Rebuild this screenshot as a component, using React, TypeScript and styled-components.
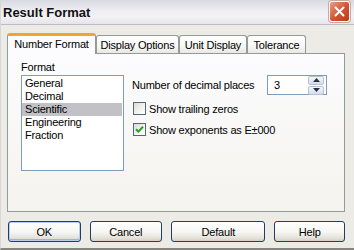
import React from 'react';
import styled, { createGlobalStyle } from 'styled-components';

const GlobalStyle = createGlobalStyle`
  html, body {
    margin: 0;
    padding: 0;
  }
  body {
    width: 354px;
    height: 250px;
    overflow: hidden;
    background: #ecebe5;
    font-family: "Liberation Sans", Arial, sans-serif;
    font-size: 11px;
    color: #000;
  }
`;

const Window = styled.div`
  width: 354px;
  height: 250px;
  box-sizing: border-box;
  display: flex;
  flex-direction: column;
  background: #ecebe5;
  border-left: 1px solid #d8d7d1;
  border-bottom: 2px solid #85847f;
`;

const TitleBar = styled.div`
  height: 25px;
  box-sizing: border-box;
  display: flex;
  align-items: center;
  justify-content: space-between;
  padding: 0 4px 0 2px;
  background: linear-gradient(#d9d9e2, #eeeef2 45%, #f3f3f6 70%, #e4e4ea);
  border-bottom: 1px solid #bdbdc6;
`;

const Title = styled.div`
  font-weight: bold;
  font-size: 13px;
  color: #111;
`;

const CloseButton = styled.div`
  width: 21px;
  height: 21px;
  box-sizing: border-box;
  margin-top: -2px;
  border: 1px solid #fff;
  border-radius: 3px;
  background: linear-gradient(135deg, #e99c84, #d2532f 55%, #b83a1c);
  display: flex;
  align-items: center;
  justify-content: center;
  box-shadow: 0 0 0 1px #c9a99e;
`;

const Body = styled.div`
  flex: 1;
  display: flex;
  flex-direction: column;
  padding: 7px 9px 0 6px;
`;

const TabStrip = styled.div`
  display: flex;
  align-items: flex-end;
  height: 21px;
`;

const Tab = styled.div<{ $active?: boolean; $width: number }>`
  width: ${({ $width }) => $width}px;
  height: ${({ $active }) => ($active ? 21 : 18)}px;
  box-sizing: border-box;
  display: flex;
  align-items: center;
  justify-content: center;
  border: 1px solid #919b9c;
  border-bottom: none;
  border-radius: 3px 3px 0 0;
  white-space: nowrap;
  letter-spacing: -0.2px;
  background: ${({ $active }) =>
    $active ? '#fcfcfe' : 'linear-gradient(#ffffff, #f7f7f5 60%, #e9e8e2)'};
  ${({ $active }) =>
    $active &&
    `
    position: relative;
    z-index: 1;
    margin-bottom: -1px;
    border-top: 3px solid #f3a42e;
    padding-bottom: 2px;
  `}
`;

const Panel = styled.div`
  height: 159px;
  box-sizing: border-box;
  border: 1px solid #919b9c;
  background: linear-gradient(#fcfcfe, #f4f3ee);
  display: flex;
  padding: 7px 0 0 13px;
`;

const FormatColumn = styled.div`
  display: flex;
  flex-direction: column;
`;

const FieldLabel = styled.div`
  line-height: 13px;
  margin-bottom: 1px;
  letter-spacing: -0.2px;
`;

const ListBox = styled.div`
  width: 103px;
  height: 96px;
  box-sizing: border-box;
  border: 1px solid #7f9db9;
  background: #fff;
  padding: 1px 1px 0 0;
`;

const ListItem = styled.div<{ $selected?: boolean }>`
  height: 13px;
  line-height: 13px;
  padding-left: 3px;
  letter-spacing: -0.2px;
  background: ${({ $selected }) => ($selected ? '#c1c1c6' : 'transparent')};
`;

const OptionsColumn = styled.div`
  display: flex;
  flex-direction: column;
  margin: 14px 0 0 8px;
`;

const SpinRow = styled.div`
  width: 195px;
  display: flex;
  align-items: center;
  justify-content: space-between;
  margin-bottom: 7px;
`;

const OptionText = styled.span`
  letter-spacing: -0.2px;
`;

const SpinBox = styled.div`
  width: 60px;
  height: 20px;
  box-sizing: border-box;
  border: 1px solid #7f9db9;
  background: #fff;
  display: flex;
  align-items: center;
  justify-content: space-between;
  padding: 0 2px 0 6px;
`;

const SpinButtons = styled.div`
  display: flex;
  flex-direction: column;
  gap: 1px;
`;

const SpinButton = styled.div`
  width: 14px;
  height: 7px;
  border: 1px solid #b4c2d6;
  border-radius: 2px;
  background: linear-gradient(#f4f6fb, #d5ddec);
  display: flex;
  align-items: center;
  justify-content: center;
`;

const CheckRow = styled.label`
  display: flex;
  align-items: center;
  gap: 3px;
  height: 13px;
  margin: 0 0 8px 1px;
`;

const CheckBox = styled.span<{ $checked?: boolean }>`
  width: 13px;
  height: 13px;
  box-sizing: border-box;
  border: 1px solid #51687e;
  background: linear-gradient(135deg, #dcdcd6, #f4f4f0 60%, #ffffff);
  display: flex;
  align-items: center;
  justify-content: center;
`;

const ButtonRow = styled.div`
  display: flex;
  gap: 9px;
  margin-top: 9px;
  padding-left: 1px;
`;

const PushButton = styled.div<{ $width: number; $default?: boolean }>`
  width: ${({ $width }) => $width}px;
  height: 21px;
  box-sizing: border-box;
  border: 1px solid #1f3f66;
  border-radius: 3px;
  background: linear-gradient(#ffffff, #f5f5f2 55%, #e3e1d8 85%, #d2cfc4);
  display: flex;
  align-items: center;
  justify-content: center;
  letter-spacing: -0.2px;
  box-shadow: ${({ $default }) =>
    $default ? 'inset 0 0 0 1px #b9cdf0, inset 0 -1px 0 1px #9ab4e2' : 'inset 0 -1px 0 #d8d4c8'};
`;

const tabs = [
  { label: 'Number Format', width: 89, active: true },
  { label: 'Display Options', width: 83 },
  { label: 'Unit Display', width: 68 },
  { label: 'Tolerance', width: 59 },
];

const formats = ['General', 'Decimal', 'Scientific', 'Engineering', 'Fraction'];

const buttons = [
  { label: 'OK', width: 73, isDefault: true },
  { label: 'Cancel', width: 73 },
  { label: 'Default', width: 95 },
  { label: 'Help', width: 71 },
];

const Arrow: React.FC<{ up?: boolean }> = ({ up }) => (
  <svg width="7" height="4" viewBox="0 0 7 4">
    <path d={up ? 'M0 4 L3.5 0 L7 4 Z' : 'M0 0 L3.5 4 L7 0 Z'} fill="#2a2f3a" />
  </svg>
);

const App: React.FC = () => {
  return (
    <Window>
      <GlobalStyle />
      <TitleBar>
        <Title>Result Format</Title>
        <CloseButton>
          <svg width="11" height="11" viewBox="0 0 11 11">
            <path d="M1.5 1.5 L9.5 9.5 M9.5 1.5 L1.5 9.5" stroke="#fff" strokeWidth="2" strokeLinecap="round" />
          </svg>
        </CloseButton>
      </TitleBar>
      <Body>
        <TabStrip>
          {tabs.map((tab) => (
            <Tab key={tab.label} $active={tab.active} $width={tab.width}>
              {tab.label}
            </Tab>
          ))}
        </TabStrip>
        <Panel>
          <FormatColumn>
            <FieldLabel>Format</FieldLabel>
            <ListBox>
              {formats.map((f) => (
                <ListItem key={f} $selected={f === 'Scientific'}>
                  {f}
                </ListItem>
              ))}
            </ListBox>
          </FormatColumn>
          <OptionsColumn>
            <SpinRow>
              <OptionText>Number of decimal places</OptionText>
              <SpinBox>
                <span>3</span>
                <SpinButtons>
                  <SpinButton>
                    <Arrow up />
                  </SpinButton>
                  <SpinButton>
                    <Arrow />
                  </SpinButton>
                </SpinButtons>
              </SpinBox>
            </SpinRow>
            <CheckRow>
              <CheckBox />
              <OptionText>Show trailing zeros</OptionText>
            </CheckRow>
            <CheckRow>
              <CheckBox $checked>
                <svg width="9" height="9" viewBox="0 0 9 9">
                  <path d="M1 4.2 L3.4 6.6 L8 1.8" stroke="#21a121" strokeWidth="2" fill="none" />
                </svg>
              </CheckBox>
              <OptionText>Show exponents as E±000</OptionText>
            </CheckRow>
          </OptionsColumn>
        </Panel>
        <ButtonRow>
          {buttons.map((b) => (
            <PushButton key={b.label} $width={b.width} $default={b.isDefault}>
              {b.label}
            </PushButton>
          ))}
        </ButtonRow>
      </Body>
    </Window>
  );
};

export default App;
